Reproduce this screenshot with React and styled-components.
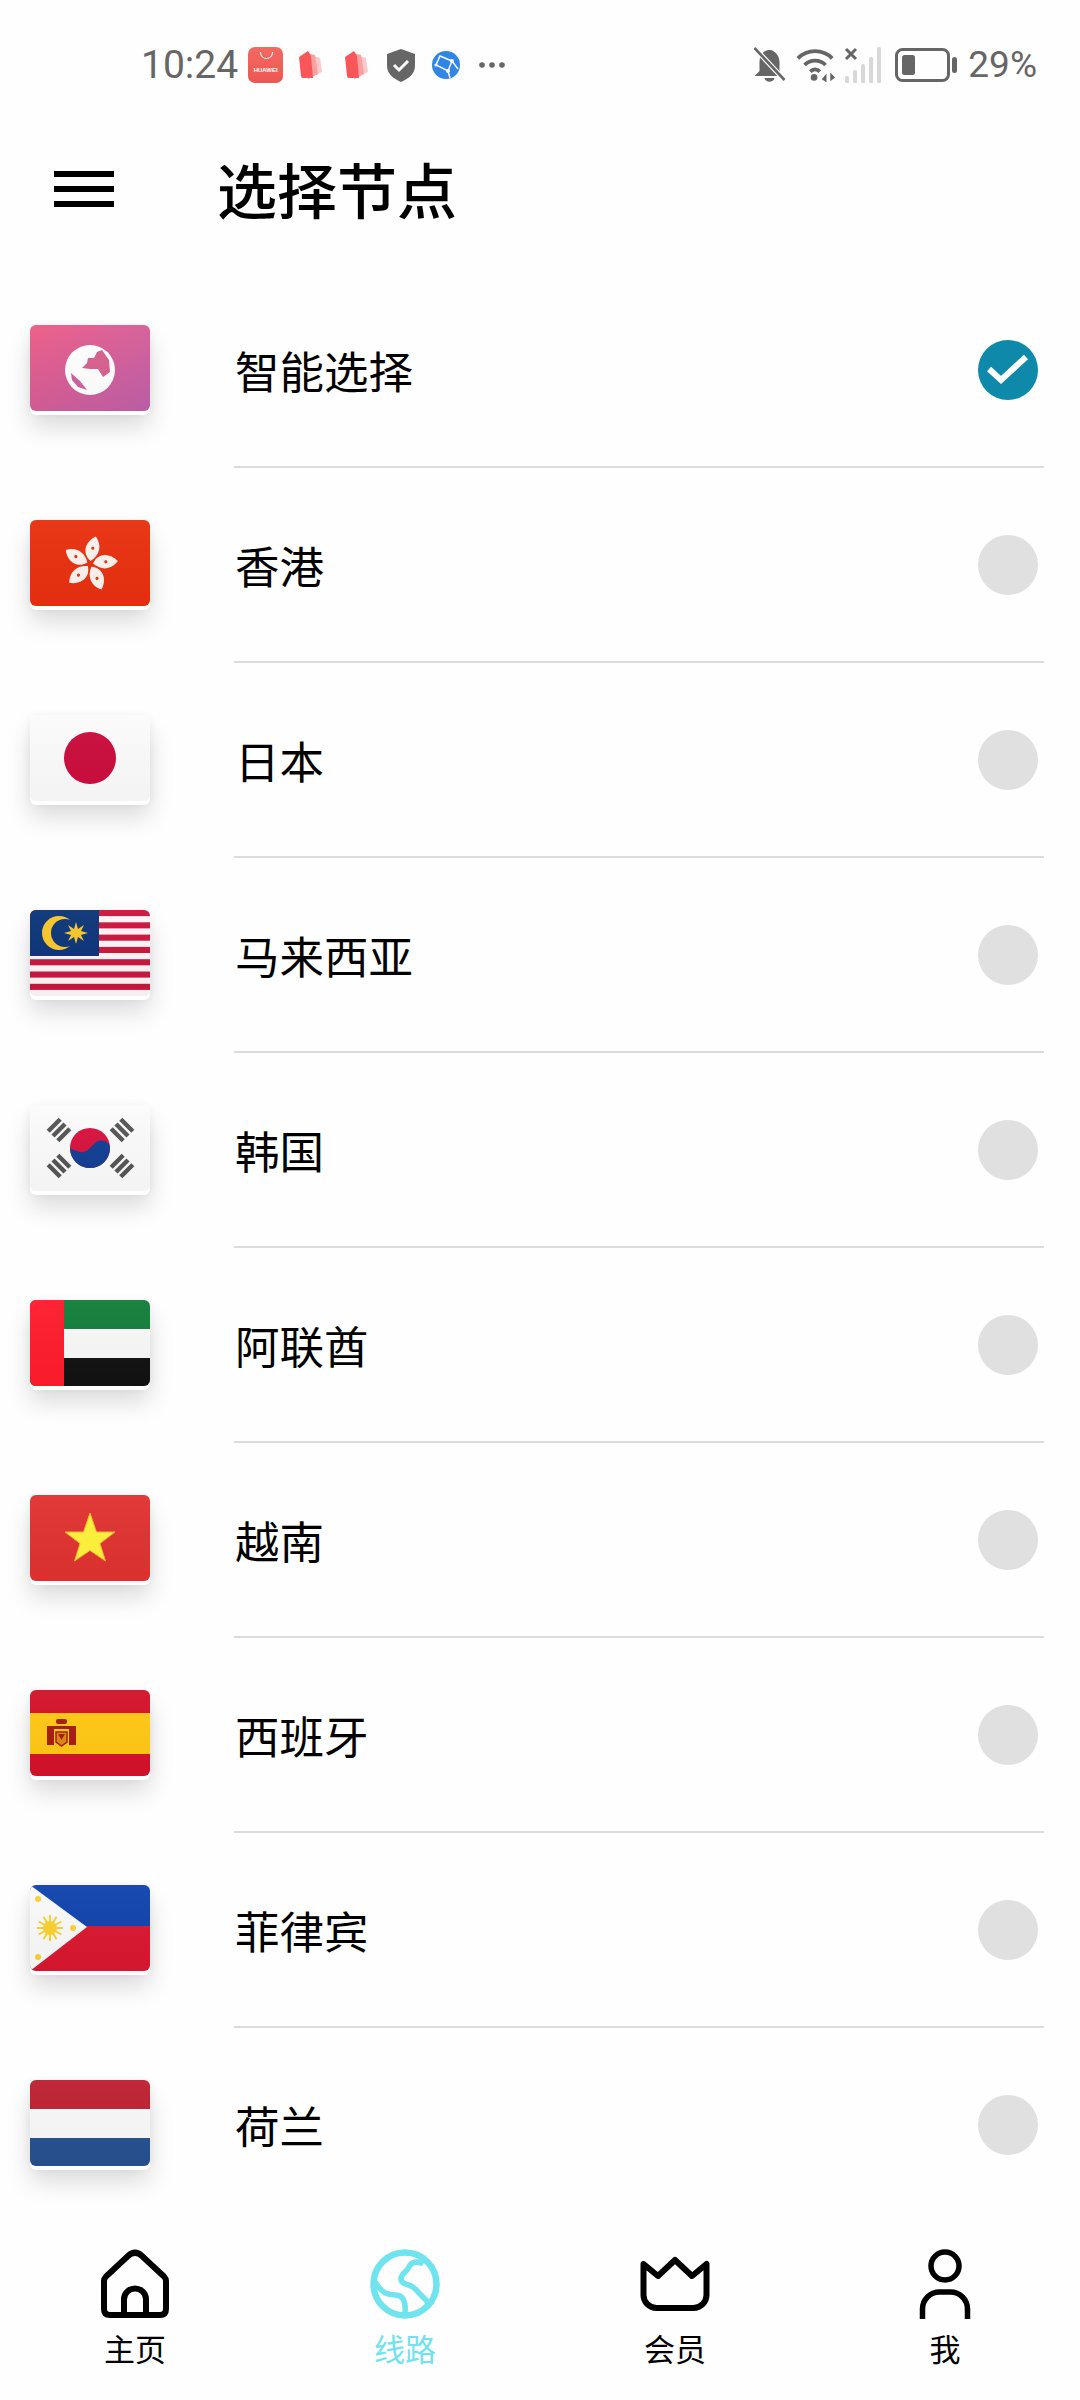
import styled, { createGlobalStyle } from "styled-components";

const GlobalStyle = createGlobalStyle`
  * {
    margin: 0;
    padding: 0;
    box-sizing: border-box;
  }
  body {
    background-color: #fefefe;
    font-family: "Noto Sans CJK SC", "Noto Sans", sans-serif;
  }
`;

const Page = styled.div`
  width: 1080px;
  height: 2400px;
  display: flex;
  flex-direction: column;
  background-color: #fefefe;
  overflow: hidden;
`;

const StatusBar = styled.div`
  height: 130px;
  flex-shrink: 0;
  display: flex;
  justify-content: space-between;
  align-items: center;
  padding: 0 43px 0 141px;
  color: #666;
`;

const StatusGroup = styled.div`
  display: flex;
  align-items: center;
`;

const StatusText = styled.span`
  font-family: Roboto, "Liberation Sans", sans-serif;
  font-size: ${(p) => p.$size || 39}px;
  line-height: 46px;
  color: #666;
  margin-left: ${(p) => p.$gap || 0}px;
`;

const Slot = styled.span`
  display: flex;
  margin-left: ${(p) => p.$gap || 0}px;
`;

const StoreBadge = styled.span`
  width: 35px;
  height: 36px;
  margin-left: 10px;
  border-radius: 7px;
  background: linear-gradient(180deg, #f26a62, #ee5650);
  display: flex;
  flex-direction: column;
  align-items: center;
  justify-content: flex-end;
  padding-bottom: 9px;
  position: relative;
  color: #fff;
  font-family: "Liberation Sans", sans-serif;
  font-weight: 700;
  font-size: 6px;
  line-height: 7px;
  letter-spacing: 0;

  &::before {
    content: "";
    position: absolute;
    left: 12px;
    top: 5px;
    width: 11px;
    height: 6px;
    border: 1px solid #fff;
    border-top: none;
    border-radius: 0 0 8px 8px;
  }
`;

const Header = styled.header`
  height: 125px;
  flex-shrink: 0;
  display: flex;
  align-items: center;
  padding-left: 54px;
`;

const MenuButton = styled.div`
  width: 60px;
  height: 36px;
  margin-top: -8px;
  display: flex;
  flex-direction: column;
  justify-content: space-between;

  span {
    display: block;
    height: 6px;
    background-color: #000;
  }
`;

const Title = styled.h1`
  margin-left: 103px;
  margin-top: -10px;
  font-size: 60px;
  line-height: 80px;
  font-weight: 500;
  color: #000;
`;

const List = styled.div`
  flex: 1;
  min-height: 0;
  overflow: hidden;
  padding-top: 18px;
`;

const Row = styled.div`
  height: 195px;
  display: flex;
`;

const FlagCell = styled.div`
  width: 234px;
  flex-shrink: 0;
  padding-left: 30px;
  display: flex;
  align-items: center;
`;

const FlagFrame = styled.div`
  width: 120px;
  height: 86px;
  margin-bottom: 6px;
  border-radius: 6px;
  overflow: hidden;
  box-shadow: 0 4px 0 #fff, 0 16px 24px rgba(0, 0, 0, 0.14), 0 2px 10px rgba(0, 0, 0, 0.06);

  svg {
    display: block;
  }
`;

const RowBody = styled.div`
  flex: 1;
  margin-right: 36px;
  padding-right: 6px;
  display: flex;
  align-items: center;
  justify-content: space-between;
  border-bottom: 2px solid #dcdcdc;
`;

const RowLabel = styled.span`
  font-size: 44.5px;
  line-height: 60px;
  margin-left: 1px;
  color: #000;
`;

const Radio = styled.div`
  width: 60px;
  height: 60px;
  border-radius: 50%;
  background-color: ${(p) => (p.$checked ? "#0f89a9" : "#e0e0e0")};
  display: flex;
  align-items: center;
  justify-content: center;
`;

const TabBar = styled.nav`
  height: 190px;
  flex-shrink: 0;
  padding-top: 39px;
  background-color: #fefefe;
  display: grid;
  grid-template-columns: repeat(4, 270px);
  position: relative;
`;

const Tab = styled.div`
  display: flex;
  flex-direction: column;
  align-items: center;
  color: ${(p) => (p.$active ? "#6fe3ee" : "#000")};

  svg {
    display: block;
  }
`;

const TabLabel = styled.span`
  margin-top: 9px;
  font-size: 31px;
  line-height: 40px;
`;

const Flag = ({ children, defs }) => (
  <svg width="120" height="86" viewBox="0 0 120 86">
    <defs>
      <linearGradient id="gloss" x1="0" y1="0" x2="0" y2="1">
        <stop offset="0" stopColor="#fff" stopOpacity="0.04" />
        <stop offset="1" stopColor="#000" stopOpacity="0.03" />
      </linearGradient>
      {defs}
    </defs>
    {children}
    <rect width="120" height="86" fill="url(#gloss)" />
  </svg>
);

const SmartFlag = () => (
  <Flag
    defs={
      <linearGradient id="smart" x1="0" y1="0" x2="1" y2="1">
        <stop offset="0" stopColor="#ec5b85" />
        <stop offset="1" stopColor="#bf60aa" />
      </linearGradient>
    }
  >
    <rect width="120" height="86" fill="url(#smart)" />
    <circle cx="60" cy="45" r="25" fill="#fff" />
    <path d="M67 27 L72 25 L79 35 L80 47 L73 52 L68 44 L60 44 L52 43 L57 38 L58 33 L64 33 Z" fill="#d8608f" />
    <path d="M41 48 L50 56 L57 65 L48 62 L42 55 Z" fill="#d060a0" />
  </Flag>
);

const HongKongFlag = () => (
  <Flag>
    <rect width="120" height="86" fill="#e8300f" />
    {[0, 72, 144, 216, 288].map((deg) => (
      <g key={deg} transform={`rotate(${deg + 10} 60 44)`}>
        <path d="M60 41 C50 35 51 23 61 16 C69 24 68 34 60 41 Z" fill="#fdf3ee" />
        <circle cx="60" cy="28" r="1.6" fill="#e8300f" />
      </g>
    ))}
  </Flag>
);

const JapanFlag = () => (
  <Flag>
    <rect width="120" height="86" fill="#fbfbfb" />
    <circle cx="60" cy="43" r="26" fill="#cb0c3c" />
  </Flag>
);

const MalaysiaFlag = () => (
  <Flag>
    <rect width="120" height="86" fill="#fdf5f6" />
    {[0, 1, 2, 3, 4, 5, 6].map((i) => (
      <rect key={i} y={i * 12.3} width="120" height="6.1" fill="#c8163e" />
    ))}
    <rect width="69" height="46" fill="#0b3478" />
    <circle cx="29" cy="23" r="17" fill="#f8c62c" />
    <circle cx="35" cy="23" r="14" fill="#0b3478" />
    <path
      d="M46 12 L48 19 L54 15 L51 21 L58 23 L51 25 L54 31 L48 27 L46 34 L44 27 L38 31 L41 25 L34 23 L41 21 L38 15 L44 19 Z"
      fill="#f8c62c"
    />
  </Flag>
);

const KoreaBars = ({ x, y, deg }) => (
  <g transform={`translate(${x} ${y}) rotate(${deg})`} fill="#555">
    <rect x="-8.5" y="-9" width="17" height="4.4" />
    <rect x="-8.5" y="-2.2" width="17" height="4.4" />
    <rect x="-8.5" y="4.6" width="17" height="4.4" />
  </g>
);

const KoreaFlag = () => (
  <Flag>
    <rect width="120" height="86" fill="#fbfbfb" />
    <KoreaBars x={29} y={25} deg={-45} />
    <KoreaBars x={92} y={25} deg={45} />
    <KoreaBars x={29} y={61} deg={45} />
    <KoreaBars x={92} y={61} deg={-45} />
    <circle cx="60" cy="43" r="20" fill="#d8123f" />
    <path d="M40 43 A20 20 0 0 0 80 43 C80 36 70 33 65 38 C60 43 56 48 50 47 C45 46 42 44 40 43 Z" fill="#123f94" />
  </Flag>
);

const UaeFlag = () => (
  <Flag>
    <rect width="120" height="29" fill="#127d3a" />
    <rect y="29" width="120" height="29" fill="#f8f8f8" />
    <rect y="58" width="120" height="28" fill="#121212" />
    <rect width="34" height="86" fill="#ff1c2c" />
  </Flag>
);

const VietnamFlag = () => (
  <Flag>
    <rect width="120" height="86" fill="#e03230" />
    <path
      d="M60 18 L66.5 37 L85 37 L70 48.5 L75.5 66 L60 55.5 L44.5 66 L50 48.5 L35 37 L53.5 37 Z"
      fill="#fff23a"
      stroke="#f5b52c"
      strokeWidth="1"
    />
  </Flag>
);

const SpainFlag = () => (
  <Flag>
    <rect width="120" height="86" fill="#d3122a" />
    <rect y="23" width="120" height="41" fill="#ffc813" />
    <g fill="#a81c10">
      <rect x="17" y="36" width="7" height="19" />
      <rect x="39" y="36" width="7" height="19" />
      <rect x="26" y="29" width="11" height="5" rx="2" />
      <rect x="24" y="36" width="15" height="3" />
      <path d="M26 42 H37 V52 L31.5 56 L26 52 Z" fill="#d88a12" stroke="#a81c10" strokeWidth="1.5" />
      <path d="M28 44 H35 L31.5 50 Z" />
    </g>
  </Flag>
);

const PhilippinesFlag = () => (
  <Flag>
    <rect width="120" height="41" fill="#0f43ad" />
    <rect y="41" width="120" height="45" fill="#d9172f" />
    <path d="M0 0 L57 42 L0 86 Z" fill="#f9f9f9" />
    <circle cx="20" cy="43" r="7" fill="#fcd02f" />
    {[0, 30, 60, 90, 120, 150].map((deg) => (
      <rect key={deg} x="7" y="42" width="26" height="2" fill="#fcd02f" transform={`rotate(${deg} 20 43)`} />
    ))}
    <circle cx="8" cy="14" r="3" fill="#fcd02f" />
    <circle cx="43" cy="43" r="3" fill="#fcd02f" />
    <circle cx="8" cy="72" r="3" fill="#fcd02f" />
  </Flag>
);

const NetherlandsFlag = () => (
  <Flag>
    <rect width="120" height="29" fill="#bd2030" />
    <rect y="29" width="120" height="29" fill="#f8f8f8" />
    <rect y="58" width="120" height="28" fill="#27508f" />
  </Flag>
);

const HomeIcon = () => (
  <svg width="70" height="70" viewBox="0 0 70 70" fill="none" stroke="currentColor" strokeWidth="6" strokeLinejoin="round">
    <path d="M4 32 Q4 29.5 6 27.5 L28 7 Q35 0.5 42 7 L64 27.5 Q66 29.5 66 32 V60 Q66 66 60 66 H10 Q4 66 4 60 Z" />
    <path d="M24 66 V50.5 a11 11 0 0 1 22 0 V66" />
  </svg>
);

const RouteIcon = () => (
  <svg width="70" height="70" viewBox="0 0 70 70" fill="none" stroke="currentColor" strokeLinecap="round">
    <circle cx="35" cy="35" r="31.5" strokeWidth="6.5" />
    <path
      d="M51 14 C45 12 41 14 39 18 C37 23 31 24 31 30 C31 35 37 35 41 37 C46 39 47 43 51 46 L58 53 M6 34 C10 42 17 46 25 46 C33 46 36 52 35 64"
      strokeWidth="5.5"
    />
  </svg>
);

const CrownIcon = () => (
  <svg width="70" height="70" viewBox="0 0 70 70" fill="none" stroke="currentColor" strokeWidth="6" strokeLinejoin="round">
    <path d="M3.5 15 L18 27 L35 11 L52 27 L66.5 15 V46 a13 13 0 0 1 -13 13 H16.5 a13 13 0 0 1 -13 -13 Z" />
  </svg>
);

const PersonIcon = () => (
  <svg width="52" height="70" viewBox="0 0 52 70" fill="none" stroke="currentColor" strokeWidth="5.5">
    <circle cx="26" cy="17" r="14" />
    <path d="M3.5 70 V60 a17 17 0 0 1 17 -17 h11 a17 17 0 0 1 17 17 V70" />
  </svg>
);

const BookIcon = () => (
  <svg width="24" height="30" viewBox="0 0 24 30">
    <path d="M13 5 L22 8 L24 22 L14 27 Z" fill="#fbc9c9" />
    <path d="M9 3 L17 5 L20 24 L10 29 Z" fill="#f9a0a0" />
    <path d="M1 7 L10 1 L13 6 L15 28 L5 28 Q3 28 3 26 Z" fill="#f9565a" />
  </svg>
);

const ShieldIcon = () => (
  <svg width="28" height="33" viewBox="0 0 28 33">
    <path d="M14 0 L28 5 V17 C28 25 21 30 14 33 C7 30 0 25 0 17 V5 Z" fill="#666" />
    <path d="M7 16 L12 21 L21 12" fill="none" stroke="#fff" strokeWidth="3" />
  </svg>
);

const BrowserIcon = () => (
  <svg width="28" height="28" viewBox="0 0 28 28">
    <circle cx="14" cy="14" r="14" fill="#2f86e8" />
    <path d="M8 5 L20 10 L16 20 L4 14 Z M20 10 L26 18 M16 20 L18 27" fill="none" stroke="#fff" strokeWidth="1.4" />
    <circle cx="20" cy="10" r="2" fill="#fff" />
    <circle cx="16" cy="20" r="2" fill="#fff" />
    <circle cx="4" cy="14" r="1.6" fill="#fff" />
  </svg>
);

const DotsIcon = () => (
  <svg width="26" height="8" viewBox="0 0 26 8" fill="#666">
    <circle cx="3" cy="4" r="2.8" />
    <circle cx="13" cy="4" r="2.8" />
    <circle cx="23" cy="4" r="2.8" />
  </svg>
);

const BellOffIcon = () => (
  <svg width="33" height="36" viewBox="0 0 32 36">
    <path d="M15 3 C9 4 6 9 6 15 V24 L1 29 H29 L26 24 V15 C26 9 22 4 17 3 Z" fill="#666" />
    <path d="M11 31 H21 C20 36 12 36 11 31 Z" fill="#666" />
    <path d="M1 1 L31 33" stroke="#fff" strokeWidth="5" />
    <path d="M1 1 L31 33" stroke="#666" strokeWidth="2.6" />
  </svg>
);

const WifiIcon = () => (
  <svg width="40" height="36" viewBox="0 0 42 36" fill="none" stroke="#666" strokeWidth="4">
    <path d="M2 11 C12 1 28 1 38 11" />
    <path d="M9 18 C15 12 25 12 31 18" />
    <path d="M15 25 C18 22 22 22 25 25" />
    <circle cx="19" cy="31" r="3.5" fill="#666" stroke="none" />
    <path d="M27 33 L32 27 V36 Z M36 26 V35 L41 31 Z" fill="#666" stroke="none" />
  </svg>
);

const SignalIcon = () => (
  <svg width="38" height="36" viewBox="0 0 38 36">
    <g fill="#d8d8d8">
      <rect x="1" y="29" width="4" height="7" rx="1.5" />
      <rect x="9" y="23" width="4" height="13" rx="1.5" />
      <rect x="17" y="17" width="4" height="19" rx="1.5" />
      <rect x="25" y="10" width="4" height="26" rx="1.5" />
      <rect x="33" y="0" width="4" height="36" rx="1.5" />
    </g>
    <path d="M2 2 L12 12 M12 2 L2 12" stroke="#666" strokeWidth="3" />
  </svg>
);

const BatteryIcon = () => (
  <svg width="62" height="34" viewBox="0 0 62 34">
    <rect x="1.5" y="1.5" width="52" height="31" rx="6" fill="none" stroke="#666" strokeWidth="3" />
    <rect x="7" y="7" width="13" height="20" rx="2.5" fill="#666" />
    <rect x="57" y="9" width="5" height="16" rx="2.5" fill="#666" />
  </svg>
);

const nodes = [
  { name: "智能选择", flag: SmartFlag, checked: true },
  { name: "香港", flag: HongKongFlag },
  { name: "日本", flag: JapanFlag },
  { name: "马来西亚", flag: MalaysiaFlag },
  { name: "韩国", flag: KoreaFlag },
  { name: "阿联酋", flag: UaeFlag },
  { name: "越南", flag: VietnamFlag },
  { name: "西班牙", flag: SpainFlag },
  { name: "菲律宾", flag: PhilippinesFlag },
  { name: "荷兰", flag: NetherlandsFlag },
];

const tabs = [
  { label: "主页", icon: HomeIcon },
  { label: "线路", icon: RouteIcon, active: true },
  { label: "会员", icon: CrownIcon },
  { label: "我", icon: PersonIcon },
];

const App = () => {
  return (
    <>
      <GlobalStyle />
      <Page>
        <StatusBar>
          <StatusGroup>
            <StatusText>10:24</StatusText>
            <StoreBadge>HUAWEI</StoreBadge>
            <Slot $gap={15}>
              <BookIcon />
            </Slot>
            <Slot $gap={22}>
              <BookIcon />
            </Slot>
            <Slot $gap={19}>
              <ShieldIcon />
            </Slot>
            <Slot $gap={17}>
              <BrowserIcon />
            </Slot>
            <Slot $gap={19}>
              <DotsIcon />
            </Slot>
          </StatusGroup>
          <StatusGroup>
            <BellOffIcon />
            <Slot $gap={10}>
              <WifiIcon />
            </Slot>
            <Slot $gap={8}>
              <SignalIcon />
            </Slot>
            <Slot $gap={13}>
              <BatteryIcon />
            </Slot>
            <StatusText $gap={11} $size={37}>
              29%
            </StatusText>
          </StatusGroup>
        </StatusBar>
        <Header>
          <MenuButton>
            <span />
            <span />
            <span />
          </MenuButton>
          <Title>选择节点</Title>
        </Header>
        <List>
          {nodes.map((node) => {
            const FlagArt = node.flag;
            return (
              <Row key={node.name}>
                <FlagCell>
                  <FlagFrame>
                    <FlagArt />
                  </FlagFrame>
                </FlagCell>
                <RowBody>
                  <RowLabel>{node.name}</RowLabel>
                  <Radio $checked={node.checked}>
                    {node.checked && (
                      <svg width="42" height="32" viewBox="0 0 42 32" fill="none" stroke="#fff" strokeWidth="6">
                        <path d="M2 15 L14 26 L39 3" />
                      </svg>
                    )}
                  </Radio>
                </RowBody>
              </Row>
            );
          })}
        </List>
        <TabBar>
          {tabs.map((tab) => {
            const TabIcon = tab.icon;
            return (
              <Tab key={tab.label} $active={tab.active}>
                <TabIcon />
                <TabLabel>{tab.label}</TabLabel>
              </Tab>
            );
          })}
        </TabBar>
      </Page>
    </>
  );
};

export default App;
